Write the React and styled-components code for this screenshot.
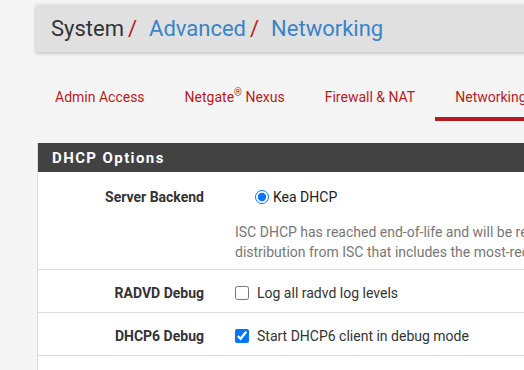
import React from 'react'
import styled, { createGlobalStyle } from 'styled-components'

const GlobalStyle = createGlobalStyle`
  html, body {
    margin: 0;
    padding: 0;
    overflow: hidden;
    background: #f5f5f5;
    font-family: Roboto, "Liberation Sans", sans-serif;
    font-size: 14px;
    color: #333;
  }
`

const Page = styled.div`
  width: 760px;
  padding: 5px 0 0 36px;
`

const Breadcrumb = styled.h1`
  margin: 0;
  height: 47px;
  display: flex;
  align-items: center;
  padding-left: 15px;
  background: #e0e0e0;
  box-shadow: 0 1px 4px rgba(0, 0, 0, 0.25);
  font-size: 22px;
  font-weight: 400;
  color: #333;
`

const Crumb = styled.span`
  color: ${p => (p.$link ? '#3a83c6' : '#333')};
`

const Sep = styled.span`
  color: #b71c1c;
  margin: 0 12px 0 4px;
`

const Tabs = styled.nav`
  display: flex;
  margin-top: 20px;
`

const Tab = styled.a`
  display: block;
  padding: 15px 20px 10px;
  line-height: 20px;
  font-size: 14px;
  color: #b71c1c;
  text-decoration: none;
  border-bottom: 4px solid ${p => (p.$active ? '#b71c1c' : 'transparent')};
  white-space: nowrap;
  &:first-child {
    padding-left: 19px;
  }
  sup {
    font-size: 10px;
    line-height: 0;
  }
`

const Panel = styled.section`
  margin-top: 22px;
  margin-left: 1px;
  padding-bottom: 40px;
  background: #fff;
  border-left: 1px solid #ddd;
`

const PanelHeading = styled.h2`
  margin: 0;
  height: 29px;
  display: flex;
  align-items: center;
  padding-left: 14px;
  background: #424242;
  color: #fff;
  font-size: 15px;
  font-weight: 700;
  letter-spacing: 1.4px;
`

const Row = styled.div`
  display: grid;
  grid-template-columns: 182px 1fr;
  padding: ${p => p.$pad || '13px 0 9px'};
  border-bottom: 1px solid #ddd;
`

const Label = styled.div`
  text-align: right;
  padding-right: 16px;
  font-weight: 700;
  line-height: 20px;
`

const Value = styled.div`
  padding-left: 15px;
  line-height: 20px;
`

const Option = styled.label`
  display: flex;
  align-items: center;
  gap: 4px;
  margin-left: ${p => p.$indent || 0}px;
  color: #222;
  input {
    margin: 0;
    width: 14px;
    height: 14px;
  }
`

const Check = styled.label`
  display: flex;
  align-items: center;
  gap: 8px;
  input {
    margin: 0;
    width: 14px;
    height: 14px;
  }
`

const Help = styled.p`
  margin: 16px 0 0;
  color: #777;
  line-height: 19.5px;
  white-space: nowrap;
`

export default function App() {
  return (
    <Page>
      <GlobalStyle />
      <Breadcrumb>
        <Crumb>System</Crumb>
        <Sep>/</Sep>
        <Crumb $link>Advanced</Crumb>
        <Sep>/</Sep>
        <Crumb $link>Networking</Crumb>
      </Breadcrumb>
      <Tabs>
        <Tab>Admin Access</Tab>
        <Tab>Netgate<sup>®</sup> Nexus</Tab>
        <Tab>Firewall &amp; NAT</Tab>
        <Tab $active>Networking</Tab>
        <Tab>Miscellaneous</Tab>
      </Tabs>
      <Panel>
        <PanelHeading>DHCP Options</PanelHeading>
        <Row $pad="15px 0 7px">
          <Label>Server Backend</Label>
          <Value>
            <Option $indent={20}>
              <input type="radio" name="backend" defaultChecked />
              Kea DHCP
            </Option>
            <Help>
              ISC DHCP has reached end-of-life and will be removed from a future version of pfSense.
              <br />
              distribution from ISC that includes the most-requested features.
            </Help>
          </Value>
        </Row>
        <Row>
          <Label>RADVD Debug</Label>
          <Value>
            <Check>
              <input type="checkbox" />
              Log all radvd log levels
            </Check>
          </Value>
        </Row>
        <Row>
          <Label>DHCP6 Debug</Label>
          <Value>
            <Check>
              <input type="checkbox" defaultChecked />
              Start DHCP6 client in debug mode
            </Check>
          </Value>
        </Row>
      </Panel>
    </Page>
  )
}
